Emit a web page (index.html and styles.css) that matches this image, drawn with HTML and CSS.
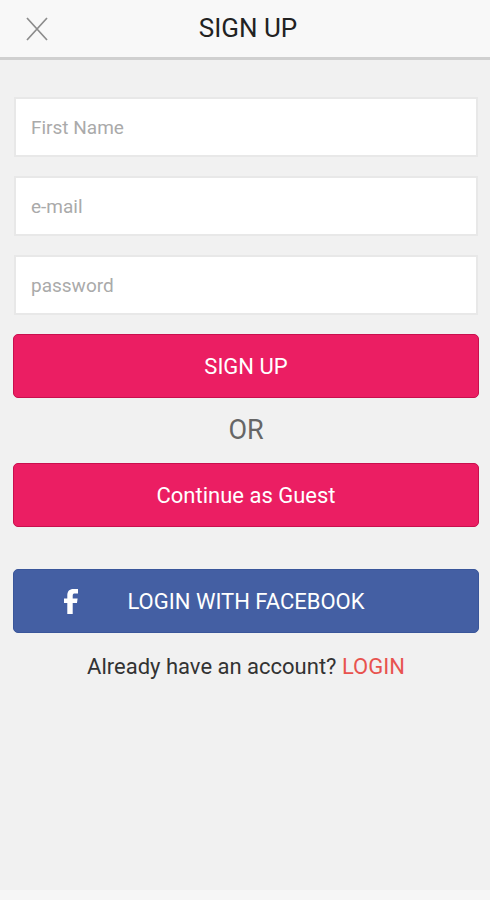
FILE: index.html
```html
<!DOCTYPE html>
<html lang="en">
<head>
<meta charset="utf-8">
<meta name="viewport" content="width=device-width, initial-scale=1">
<title>Sign up</title>
<link rel="stylesheet" href="styles.css">
</head>
<body>
<header class="bar">
  <button class="close" type="button" aria-label="Close">
    <svg width="24" height="26" viewBox="0 0 24 26"><path d="M2 2L22 24M22 2L2 24" fill="none" stroke="#8c8c8c" stroke-width="1.7"/></svg>
  </button>
  <h1 class="title">SIGN UP</h1>
</header>
<main class="content">
  <form class="form">
    <input class="field" type="text" placeholder="First Name" aria-label="First Name">
    <input class="field" type="email" placeholder="e-mail" aria-label="e-mail">
    <input class="field" type="password" placeholder="password" aria-label="password">
    <button class="button" type="submit">SIGN UP</button>
  </form>
  <p class="or">OR</p>
  <button class="button" type="button">Continue as Guest</button>
  <button class="button facebook" type="button">
    <svg class="logo" width="14" height="25" viewBox="0 0 14 25"><path d="M3.3 25V14H0V9.4H3.3V6.4C3.3 2.2 5.6 0 9.4 0H14V4.6H11C9.3 4.6 8.7 5.2 8.7 6.7V9.4H13.6L13 14H8.7V25Z" fill="#fff"/></svg>
    <span>LOGIN WITH FACEBOOK</span>
  </button>
  <p class="account">Already have an account? <a class="login" href="#">LOGIN</a></p>
</main>
<footer class="foot"></footer>
</body>
</html>
```
FILE: styles.css
```css
* {
  box-sizing: border-box;
}

body {
  margin: 0;
  min-height: 100vh;
  display: flex;
  flex-direction: column;
  background: #f1f1f1;
  color: #333;
  font-family: Roboto, sans-serif;
  font-size: 22px;
}

.bar {
  display: grid;
  grid-template-columns: 50px 1fr 44px;
  align-items: center;
  height: 60px;
  padding: 0 12px;
  background: #f8f8f8;
  border-bottom: 3px solid #d0d0d0;
}

.close {
  display: flex;
  justify-content: center;
  padding: 0;
  border: 0;
  background: none;
}

.title {
  margin: 0;
  padding-bottom: 2px;
  text-align: center;
  font-size: 26px;
  font-weight: 400;
  color: #222;
}

.content {
  flex: 1;
  padding: 37px 11px 0 13px;
}

.form {
  display: flex;
  flex-direction: column;
  gap: 19px;
}

.field {
  height: 60px;
  margin: 0 1px;
  padding: 0 15px;
  border: 2px solid #e8e8e8;
  border-radius: 0;
  background: #fff;
  font: inherit;
  font-size: 19px;
}

.field::placeholder {
  color: #aaa;
}

.button {
  display: block;
  width: 100%;
  height: 64px;
  padding: 0;
  border: 1px solid #c8104e;
  border-radius: 5px;
  background: #eb1e63;
  color: #fff;
  font: inherit;
}

.or {
  margin: 0;
  text-align: center;
  font-size: 27px;
  line-height: 65px;
  color: #666;
}

.facebook {
  display: grid;
  grid-template-columns: 14px 1fr 14px;
  align-items: center;
  margin-top: 42px;
  padding: 0 50px;
  border-color: #3a569a;
  background: #445fa3;
}

.account {
  margin: 20px 0 0;
  text-align: center;
  line-height: 28px;
}

.login {
  color: #e8534f;
  text-decoration: none;
}

.foot {
  height: 10px;
  background: #f6f6f6;
}
```
